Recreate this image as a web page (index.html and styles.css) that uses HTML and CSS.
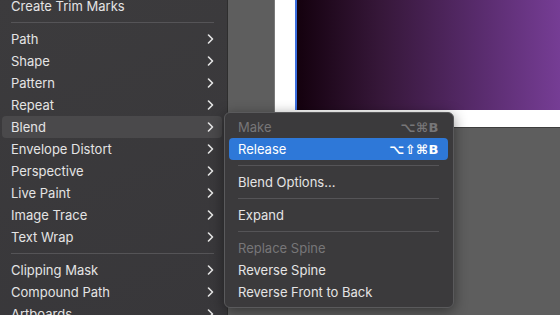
FILE: index.html
```html
<!DOCTYPE html>
<html lang="en">
<head>
    <meta charset="UTF-8">
    <title>Object menu - Blend</title>
    <link rel="stylesheet" href="styles.css">
</head>
<body>
    <div class="workspace">
        <div class="artboard">
            <div class="gradient-box"></div>
        </div>

        <div class="menu main-menu">
            <div class="item">Create Trim Marks</div>
            <div class="sep"></div>
            <div class="item sub">Path <svg class="chev" viewBox="0 0 7 10"><polyline points="1.5,1 5.5,5 1.5,9"/></svg></div>
            <div class="item sub">Shape <svg class="chev" viewBox="0 0 7 10"><polyline points="1.5,1 5.5,5 1.5,9"/></svg></div>
            <div class="item sub">Pattern <svg class="chev" viewBox="0 0 7 10"><polyline points="1.5,1 5.5,5 1.5,9"/></svg></div>
            <div class="item sub">Repeat <svg class="chev" viewBox="0 0 7 10"><polyline points="1.5,1 5.5,5 1.5,9"/></svg></div>
            <div class="item sub open">Blend <svg class="chev" viewBox="0 0 7 10"><polyline points="1.5,1 5.5,5 1.5,9"/></svg></div>
            <div class="item sub">Envelope Distort <svg class="chev" viewBox="0 0 7 10"><polyline points="1.5,1 5.5,5 1.5,9"/></svg></div>
            <div class="item sub">Perspective <svg class="chev" viewBox="0 0 7 10"><polyline points="1.5,1 5.5,5 1.5,9"/></svg></div>
            <div class="item sub">Live Paint <svg class="chev" viewBox="0 0 7 10"><polyline points="1.5,1 5.5,5 1.5,9"/></svg></div>
            <div class="item sub">Image Trace <svg class="chev" viewBox="0 0 7 10"><polyline points="1.5,1 5.5,5 1.5,9"/></svg></div>
            <div class="item sub">Text Wrap <svg class="chev" viewBox="0 0 7 10"><polyline points="1.5,1 5.5,5 1.5,9"/></svg></div>
            <div class="sep"></div>
            <div class="item sub">Clipping Mask <svg class="chev" viewBox="0 0 7 10"><polyline points="1.5,1 5.5,5 1.5,9"/></svg></div>
            <div class="item sub">Compound Path <svg class="chev" viewBox="0 0 7 10"><polyline points="1.5,1 5.5,5 1.5,9"/></svg></div>
            <div class="item sub">Artboards <svg class="chev" viewBox="0 0 7 10"><polyline points="1.5,1 5.5,5 1.5,9"/></svg></div>
        </div>

        <div class="menu sub-menu">
            <div class="item disabled">Make <span class="keys">⌥⌘B</span></div>
            <div class="item active">Release <span class="keys">⌥⇧⌘B</span></div>
            <div class="sep"></div>
            <div class="item">Blend Options...</div>
            <div class="sep"></div>
            <div class="item">Expand</div>
            <div class="sep"></div>
            <div class="item disabled">Replace Spine</div>
            <div class="item">Reverse Spine</div>
            <div class="item">Reverse Front to Back</div>
        </div>
    </div>
</body>
</html>
```

FILE: styles.css
```css
body {
    margin: 0;
    font-family: Inter, "Liberation Sans", Arial, sans-serif;
    overflow: hidden;
}
.workspace {
    position: relative;
    width: 560px;
    height: 315px;
    background-color: #5e5e5e;
    overflow: hidden;
}
.artboard {
    position: absolute;
    left: 274px;
    top: -10px;
    width: 300px;
    height: 137px;
    background-color: #ffffff;
    border-left: 1px solid #7a7a7a;
    box-shadow: 0 1px 0 #3e3e3e;
}
.gradient-box {
    margin-left: 20px;
    height: 120px;
    border-left: 2px solid #3b6fe0;
    background: linear-gradient(to right, #14010e 0%, #361739 30%, #582b6c 65%, #7b409c 100%);
}
.menu {
    position: absolute;
    box-sizing: border-box;
    color: #e4e4e4;
    font-size: 13px;
}
.main-menu {
    left: -3px;
    top: -5px;
    width: 231px;
    height: 340px;
    padding: 0 5px;
    background: linear-gradient(160deg, #3c3b3d, #38373a);
    border-right: 1px solid #2e2e2e;
}
.item {
    height: 22px;
    display: flex;
    align-items: center;
    justify-content: space-between;
    padding: 0 8px;
    border-radius: 4px;
    white-space: nowrap;
}
.main-menu .item {
    padding-left: 9px;
}
.item.open {
    background-color: #4a494b;
}
.chev {
    width: 7px;
    height: 10px;
    fill: none;
    stroke: #e6e6e6;
    stroke-width: 1.6;
    stroke-linecap: round;
    stroke-linejoin: round;
}
.sep {
    height: 11px;
    display: flex;
    align-items: center;
    padding: 0 8px 0 9px;
}
.sep::after {
    content: "";
    flex: 1;
    height: 1px;
    background-color: #555457;
}
.sub-menu {
    left: 224px;
    top: 112px;
    width: 230px;
    padding: 3px 5px 4px 4px;
    background-color: #3b3a3c;
    border: 1px solid #5a5a5c;
    border-radius: 6px;
    box-shadow: 0 3px 14px rgba(0, 0, 0, 0.45);
}
.sub-menu .item {
    padding: 0 9px;
}
.sub-menu .sep {
    padding: 0 9px;
}
.item.disabled {
    color: #777678;
}
.item.active {
    background-color: #2e78d8;
    color: #ffffff;
}
.keys {
    font-family: "DejaVu Sans", sans-serif;
    font-size: 13px;
    font-weight: bold;
    letter-spacing: 0.5px;
}
```
